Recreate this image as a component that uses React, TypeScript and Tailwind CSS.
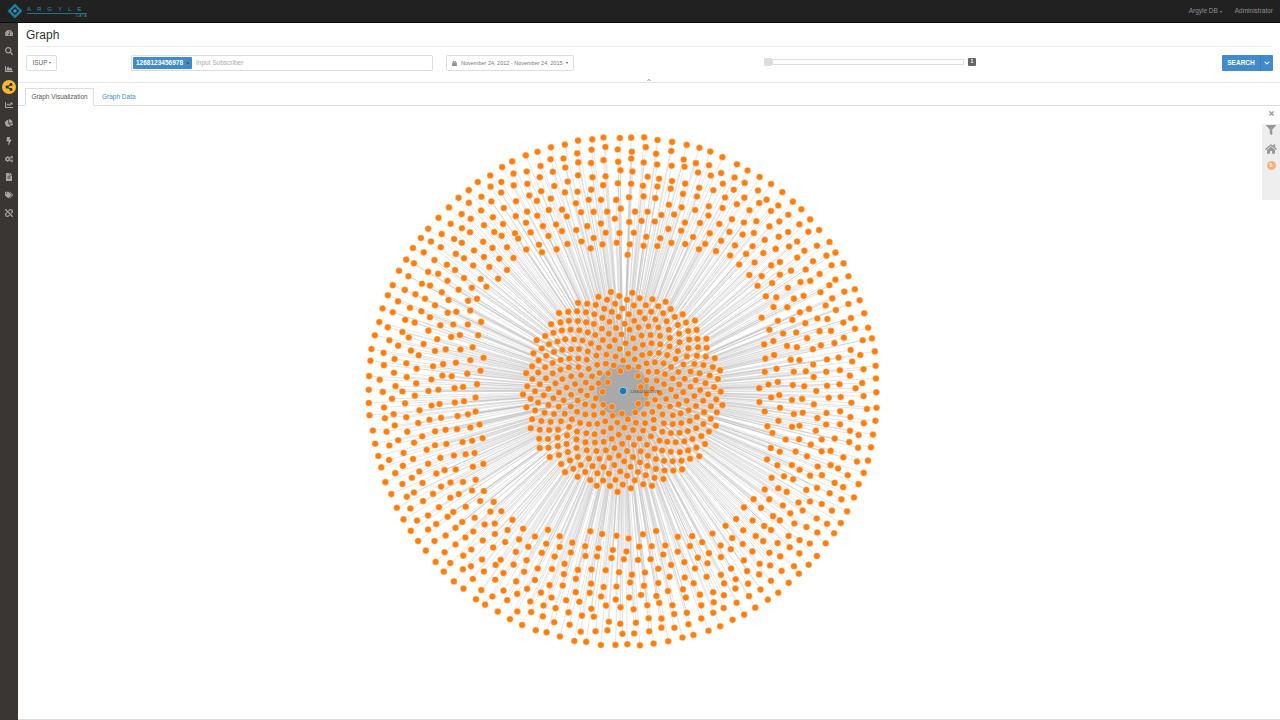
import React from 'react';
import {
  FaTachometerAlt, FaSearch, FaChartArea, FaShareAlt, FaChartLine, FaChartPie, FaBolt, FaCogs,
  FaFileAlt, FaTags, FaUnlink, FaCalendarAlt, FaChevronDown, FaChevronUp, FaTimes, FaFilter, FaHome,
} from 'react-icons/fa';

const CX = 605;
const CY = 285; // graph centre inside the canvas (canvas starts at y=106)

// small seeded random so the layout stays the same on every load
function makeRandom(seed: number) {
  let s = seed;
  return () => {
    s = (s * 16807) % 2147483647;
    return (s - 1) / 2147483646;
  };
}

function buildNodes() {
  const rand = makeRandom(4711);
  const nodes: { x: number; y: number }[] = [];
  // outer band, rows of nodes on rough rings
  for (let r = 254; r > 130; r -= 12) {
    const count = Math.round((2 * Math.PI * r) / 13.5);
    const offset = rand() * 6;
    for (let i = 0; i < count; i++) {
      const a = offset + (i / count) * Math.PI * 2 + (rand() - 0.5) * 0.012;
      const rr = r + (r === 254 ? (rand() - 0.5) * 2 : (rand() - 0.5) * 6);
      const inner = 136 + 30 * Math.abs(Math.sin(2 * a)) ** 2;
      if (rr < inner) continue;
      nodes.push({ x: CX + Math.cos(a) * rr, y: CY + Math.sin(a) * rr });
    }
  }
  // inner disc, sunflower spread
  const golden = Math.PI * (3 - Math.sqrt(5));
  for (let i = 12; i < 400; i++) {
    const rr = 5.05 * Math.sqrt(i) + (rand() - 0.5) * 1.2;
    nodes.push({ x: CX + Math.cos(i * golden) * rr, y: CY + Math.sin(i * golden) * rr });
  }
  return nodes;
}

const NODES = buildNodes();

const NAV = [
  { icon: FaTachometerAlt },
  { icon: FaSearch },
  { icon: FaChartArea },
  { icon: FaShareAlt, active: true },
  { icon: FaChartLine },
  { icon: FaChartPie },
  { icon: FaBolt },
  { icon: FaCogs },
  { icon: FaFileAlt },
  { icon: FaTags },
  { icon: FaUnlink },
];

function Logo() {
  return (
    <div className="flex items-center pl-[7px]">
      <svg width="16" height="16" viewBox="0 0 16 16">
        <path d="M8 0.5 15.5 8 8 15.5 0.5 8Z" fill="#1b7f9e" />
        <path d="M8 4 12 8 8 12 4 8Z" fill="#1f2020" />
        <path d="M8 6 10 8 8 10 6 8Z" fill="#2ea7c9" />
      </svg>
      <div className="flex flex-col items-end leading-none ml-[4px] mt-[3px]">
        <span className="text-[6px] tracking-[6px] text-[#3a8ba6] border-b border-[#2a6f88] pb-[1px] whitespace-nowrap">ARGYLE</span>
        <span className="text-[3.5px] tracking-[0.6px] text-[#3a8ba6] mt-[1px]">DATA</span>
      </div>
    </div>
  );
}

function Sidebar() {
  return (
    <div className="w-[18px] bg-[#3a3633] flex flex-col items-center pt-[1px] shrink-0">
      {NAV.map((item, i) => {
        const Icon = item.icon;
        return (
          <div key={i} className="w-[18px] h-[18px] flex items-center justify-center">
            {item.active ? (
              <div className="w-[14px] h-[14px] rounded-full bg-[#f6b830] flex items-center justify-center text-[#33302d]">
                <Icon size={8} />
              </div>
            ) : (
              <Icon size={8} className="text-[#a8a5a2]" />
            )}
          </div>
        );
      })}
    </div>
  );
}

function Toolbar() {
  return (
    <div className="relative h-[36px] border-b border-[#e5e5e5] flex items-start pt-[8px] pl-[8px] pr-[7px] shrink-0 text-[#555]">
      <div className="w-[31px] h-[16px] border border-[#ddd] rounded-[2px] flex items-center justify-center text-[6.5px] text-[#666]">
        ISUP <span className="ml-[1px] text-[4px]">▾</span>
      </div>
      <div className="ml-[74px] w-[302px] h-[16px] border border-[#ddd] rounded-[2px] flex items-center pl-[1px]">
        <div className="w-[59px] h-[12px] bg-[#428bca] rounded-[1px] flex items-center pl-[3px] text-white text-[6.5px] font-bold">
          1268123456978
          <FaTimes size={4} className="ml-[3px] text-[#35536e]" />
        </div>
        <span className="ml-[4px] text-[6.5px] text-[#aaa]">Input Subscriber</span>
      </div>
      <div className="ml-[13px] w-[128px] h-[16px] border border-[#ddd] rounded-[2px] flex items-center pl-[5px] text-[5.5px] text-[#777]">
        <FaCalendarAlt size={5} className="text-[#666]" />
        <span className="ml-[4px]">November 24, 2012 - November 24, 2015</span>
        <span className="ml-[3px] text-[4px] text-[#555]">▾</span>
      </div>
      <div className="ml-[190px] mt-[3px] flex items-center">
        <div className="w-[8px] h-[8px] bg-[#ddd] rounded-[1px]" />
        <div className="w-[192px] h-[6px] border border-[#ddd] rounded-[1px] bg-white" />
        <div className="ml-[4px] w-[8px] h-[8px] bg-[#666] rounded-[1px] text-white text-[5px] font-bold flex items-center justify-center">1</div>
      </div>
      <div className="ml-auto h-[16px] w-[51px] flex rounded-[1px] overflow-hidden bg-[#428bca] text-white">
        <div className="w-[38px] flex items-center justify-center text-[6.5px] font-bold">SEARCH</div>
        <div className="flex-1 border-l border-[#3a7cb4] flex items-center justify-center">
          <FaChevronDown size={6} />
        </div>
      </div>
      <FaChevronUp size={4} className="absolute left-[629px] bottom-[0px] text-[#888]" />
    </div>
  );
}

function Tabs() {
  return (
    <div className="h-[23px] pt-[5px] pl-[7px] border-b border-[#ddd] flex items-stretch shrink-0 text-[6.5px]">
      <div className="w-[69px] -mb-px bg-white border border-[#ddd] border-b-white flex items-center justify-center text-[#555]">
        Graph Visualization
      </div>
      <div className="ml-[8px] flex items-center text-[#428bca]">Graph Data</div>
    </div>
  );
}

function GraphCanvas() {
  return (
    <div className="relative flex-1 bg-white overflow-hidden border-b border-[#ddd]">
      <svg width="1262" height="614" className="absolute left-0 top-0">
        <g stroke="#bdbdbd" strokeWidth="0.8" strokeOpacity="0.5">
          {NODES.map((n, i) => (
            <line key={i} x1={CX} y1={CY} x2={n.x} y2={n.y} />
          ))}
        </g>
        <circle cx={CX} cy={CY} r={26} fill="#a9a9a9" />
        {NODES.map((n, i) => (
          <circle key={i} cx={n.x} cy={n.y} r={3.3} fill="#ff7f0e" stroke="#fff" strokeOpacity="0.45" strokeWidth="0.8" />
        ))}
        <circle cx={CX} cy={CY} r={3.8} fill="#1f77b4" stroke="#fff" strokeOpacity="0.5" strokeWidth="1" />
        <text x={CX + 7} y={CY + 1.5} fontSize="4" fill="#444" fontFamily="Liberation Sans">1268123456978</text>
      </svg>
      <FaTimes size={7} className="absolute right-[5px] top-[4px] text-[#999]" />
      <div className="absolute right-0 top-[18px] w-[18px] h-[76px] bg-[#eeeeee] flex flex-col items-center pt-[1px] text-[#999]">
        <FaFilter size={10} />
        <FaHome size={12} className="mt-[8px]" />
        <div className="mt-[6px] w-[9px] h-[9px] rounded-full bg-[#f6b27a] text-white text-[6px] font-bold flex items-center justify-center">1</div>
      </div>
    </div>
  );
}

export default function App() {
  return (
    <div className="h-screen w-full flex flex-col bg-white overflow-hidden font-['Liberation_Sans',Arial,sans-serif]">
      <header className="h-[23px] bg-[#212121] border-b border-[#0c0c0c] flex items-center shrink-0">
        <Logo />
        <div className="ml-auto flex items-center text-[6.5px] text-[#8f8f8f] pr-[7px]">
          <span>Argyle DB <span className="text-[4px]">▾</span></span>
          <span className="ml-[13px]">Administrator</span>
        </div>
      </header>
      <div className="flex flex-1 min-h-0">
        <Sidebar />
        <main className="flex-1 flex flex-col min-w-0">
          <div className="h-[24px] mx-[8px] border-b border-[#eee] flex items-center pt-[1px] shrink-0">
            <h1 className="text-[12px] text-[#333] leading-none">Graph</h1>
          </div>
          <Toolbar />
          <Tabs />
          <GraphCanvas />
        </main>
      </div>
    </div>
  );
}
